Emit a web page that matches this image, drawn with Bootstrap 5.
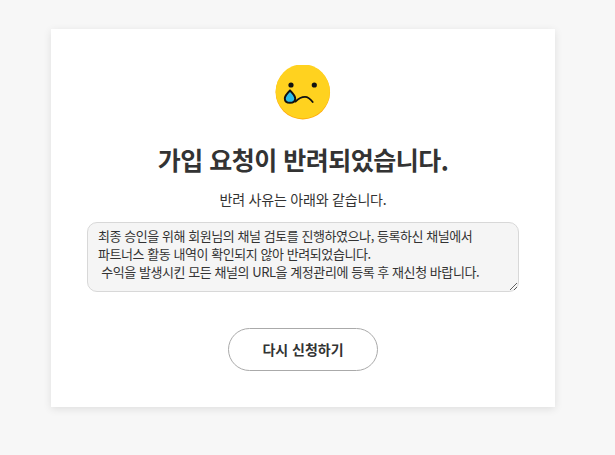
<!DOCTYPE html>
<html lang="ko">
<head>
<meta charset="utf-8">
<title>가입 요청 반려</title>
<link href="https://cdn.jsdelivr.net/npm/bootstrap@5.3.0/dist/css/bootstrap.min.css" rel="stylesheet">
<style>
html, body { height: 455px; overflow: hidden; }
body { background: #f7f7f7; font-family: "Noto Sans CJK KR", "Noto Sans", sans-serif; color: #333; padding-top: 29px; }
.sheet { width: 504px; height: 378px; margin-left: 51px; background: #fff; box-shadow: 0 2px 8px rgba(0,0,0,.1); padding: 36px 36px 0; }
.face { width: 56px; height: 56px; display: block; }
.headline { font-size: 25px; line-height: 36px; font-weight: 700; letter-spacing: -0.5px; color: #333; margin: 20px 0 0; }
.reason-lead { font-size: 14px; line-height: 20px; color: #333; margin: 12px 0 0; letter-spacing: -0.2px; }
.reason-box { display: block; width: 432px; height: 70px; margin-top: 13px; background: #f5f5f5; border: 1px solid #d8d8d8; border-radius: 10px; padding: 4px 10px; font-size: 13px; line-height: 18px; letter-spacing: -0.44px; color: #333; font-family: inherit; outline: none; }
.again { width: 150px; height: 43px; margin-top: 36px; border: 1px solid #aaa; border-radius: 22px; background: #fff; color: #333; font-size: 14px; font-weight: 700; padding: 0; }
</style>
</head>
<body>
<div class="sheet d-flex flex-column align-items-center text-center">
  <svg class="face" viewBox="0 0 56 56" aria-hidden="true">
    <circle cx="27.8" cy="27.2" r="27.2" fill="#ffa90a"/>
    <circle cx="27.8" cy="26.4" r="27.1" fill="#ffd21f"/>
    <circle cx="16" cy="20" r="2.6" fill="#111"/>
    <circle cx="39.3" cy="20" r="2.6" fill="#111"/>
    <path d="M20.5 36.5 C23 34 26 31.8 30 31.8 C33 31.8 35.5 34 37.7 37" fill="none" stroke="#111" stroke-width="1.8" stroke-linecap="round"/>
    <path d="M15 25.5 C12 28.5 9.8 31 9.8 33.5 C9.8 36.2 12 37.8 15 37.8 C18 37.8 20.2 36.2 20.2 33.5 C20.2 31 18 28.5 15 25.5 Z" fill="#2dbde8" stroke="#111" stroke-width="1.9"/>
  </svg>
  <h1 class="headline">가입 요청이 반려되었습니다.</h1>
  <p class="reason-lead">반려 사유는 아래와 같습니다.</p>
  <textarea class="reason-box text-start" readonly>최종 승인을 위해 회원님의 채널 검토를 진행하였으나, 등록하신 채널에서 
파트너스 활동 내역이 확인되지 않아 반려되었습니다.
 수익을 발생시킨 모든 채널의 URL을 계정관리에 등록 후 재신청 바랍니다.</textarea>
  <button type="button" class="btn again">다시 신청하기</button>
</div>
<script src="https://cdn.jsdelivr.net/npm/bootstrap@5.3.0/dist/js/bootstrap.bundle.min.js"></script>
</body>
</html>
